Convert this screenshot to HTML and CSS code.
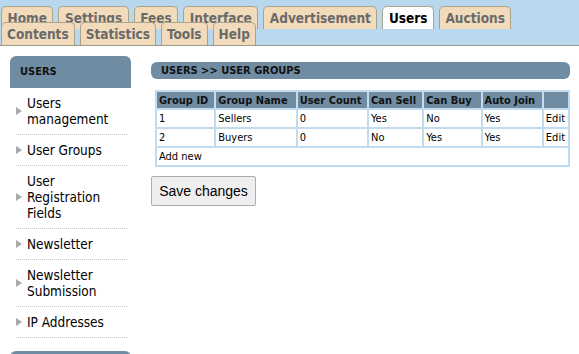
FILE: index.html
```html
<!DOCTYPE html>
<html lang="en">
<head>
  <meta charset="UTF-8" />
  <title>Users - User Groups</title>
  <link rel="stylesheet" href="styles.css">
</head>
<body>

<div class="tabbar">
  <div class="tabrow">
    <a class="tab" href="#">Home</a>
    <a class="tab" href="#">Settings</a>
    <a class="tab" href="#">Fees</a>
    <a class="tab" href="#">Interface</a>
    <a class="tab" href="#">Advertisement</a>
    <a class="tab active" href="#">Users</a>
    <a class="tab" href="#">Auctions</a>
  </div>
  <div class="tabrow second">
    <a class="tab" href="#">Contents</a>
    <a class="tab" href="#">Statistics</a>
    <a class="tab" href="#">Tools</a>
    <a class="tab" href="#">Help</a>
  </div>
</div>

<div class="page">
  <div class="sidebar">
    <div class="side-head">USERS</div>
    <ul class="side-menu">
      <li><a href="#">Users management</a></li>
      <li><a href="#">User Groups</a></li>
      <li><a href="#">User Registration Fields</a></li>
      <li><a href="#">Newsletter</a></li>
      <li><a href="#">Newsletter Submission</a></li>
      <li><a href="#">IP Addresses</a></li>
    </ul>
    <div class="side-head"></div>
  </div>

  <div class="main">
    <div class="main-head">USERS &gt;&gt; USER GROUPS</div>

    <table class="groups">
      <thead>
        <tr>
          <th class="c-id">Group ID</th>
          <th class="c-name">Group Name</th>
          <th class="c-count">User Count</th>
          <th class="c-sell">Can Sell</th>
          <th class="c-buy">Can Buy</th>
          <th class="c-join">Auto Join</th>
          <th class="c-edit"></th>
        </tr>
      </thead>
      <tbody>
        <tr><td>1</td><td>Sellers</td><td>0</td><td>Yes</td><td>No</td><td>Yes</td><td><a href="#">Edit</a></td></tr>
        <tr><td>2</td><td>Buyers</td><td>0</td><td>No</td><td>Yes</td><td>Yes</td><td><a href="#">Edit</a></td></tr>
        <tr><td colspan="7"><a href="#">Add new</a></td></tr>
      </tbody>
    </table>

    <button class="save">Save changes</button>
  </div>
</div>

</body>
</html>
```

FILE: styles.css
```css
body {
  margin: 0;
  font-family: "DejaVu Sans Condensed", "DejaVu Sans", sans-serif;
  color: #000;
  background: #fff;
}

a {
  color: #000;
  text-decoration: none;
}

/* top tabs */
.tabbar {
  background: #b9d8ee;
  border-bottom: 1px solid #9a9a88;
  height: 46px;
  padding-top: 6px;
  box-sizing: border-box;
}

.tabrow {
  display: flex;
  padding-left: 1px;
  height: 23px;
}

.tabrow.second {
  margin-top: -7px;
}

.tab {
  display: block;
  height: 23px;
  box-sizing: border-box;
  padding: 3px 5.5px 0;
  margin-right: 5px;
  background: #f1dbbb;
  border: 1px solid #aaa48c;
  border-bottom: none;
  border-radius: 5px 5px 0 0;
  color: #6a6a6a;
  font-weight: bold;
  font-size: 13.5px;
  line-height: 17px;
}

.tabrow.second .tab {
  padding: 3px 5px 0;
}

.tab.active {
  background: #fff;
  color: #000;
}

/* layout */
.page {
  display: flex;
  align-items: flex-start;
  padding: 10px 10px 0 10px;
}

.sidebar {
  width: 121px;
  flex: none;
}

.side-head {
  background: #6f8ca3;
  height: 32px;
  border-radius: 6px 6px 0 0;
  font-size: 11px;
  font-weight: bold;
  line-height: 32px;
  padding-left: 10px;
  color: #111;
}

.side-menu {
  list-style: none;
  margin: 0 0 13px 0;
  padding: 0 4px 0 6px;
}

.side-menu li {
  border-bottom: 1px dotted #c8c8c8;
}

.side-menu a {
  display: flex;
  align-items: center;
  padding: 7px 0;
  font-size: 13.5px;
  line-height: 16px;
}

.side-menu a::before {
  content: "";
  flex: none;
  width: 0;
  height: 0;
  border-left: 6px solid #a9a9a9;
  border-top: 4px solid transparent;
  border-bottom: 4px solid transparent;
  margin-right: 5px;
}

.main {
  flex: 1;
  padding-left: 20px;
}

.main-head {
  background: #6f8ca3;
  height: 17px;
  margin-top: 6px;
  border-radius: 6px;
  padding-left: 10px;
  font-size: 11px;
  font-weight: bold;
  line-height: 17px;
  color: #111;
}

table.groups {
  margin: 11px 0 0 4px;
  width: 415px;
  background: #c3dbee;
  border-spacing: 2px;
  font-size: 11px;
}

table.groups th {
  background: #6f8ca3;
  text-align: left;
  font-weight: bold;
  height: 16px;
  padding: 0 2px;
  color: #111;
}

table.groups td {
  background: #fff;
  height: 17px;
  padding: 0 2px;
}

.c-id { width: 53px; }
.c-name { width: 75px; }
.c-count { width: 65px; }
.c-sell { width: 49px; }
.c-buy { width: 52px; }
.c-join { width: 55px; }
.c-edit { width: 20px; }

.save {
  display: block;
  margin-top: 9px;
  width: 105px;
  height: 30px;
  font-family: "Liberation Sans", Arial, sans-serif;
  font-size: 14px;
  background: #efefef;
  border: 1px solid #adadad;
  border-radius: 2px;
  color: #000;
  padding: 0;
}
```
